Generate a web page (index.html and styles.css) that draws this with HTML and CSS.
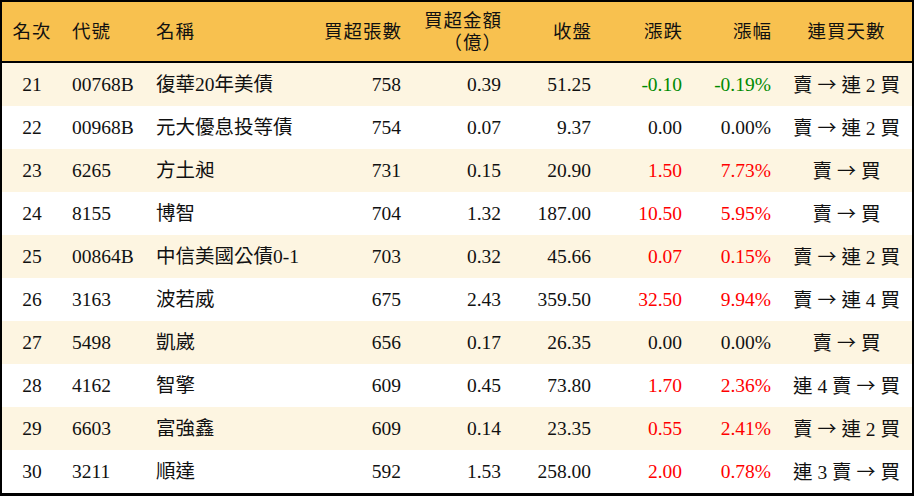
FILE: index.html
```html
<!DOCTYPE html>
<html lang="zh-Hant">
<head>
<meta charset="utf-8">
<title>買超排行</title>
<link rel="stylesheet" href="styles.css">
</head>
<body>
<table class="rank">
  <colgroup>
    <col class="c-rank"><col class="c-code"><col class="c-name"><col class="c-lots"><col class="c-amt"><col class="c-close"><col class="c-chg"><col class="c-pct"><col class="c-days">
  </colgroup>
  <thead>
    <tr>
      <th class="ctr">名次</th>
      <th class="lft">代號</th>
      <th class="lft">名稱</th>
      <th class="rgt">買超張數</th>
      <th class="rgt">買超金額<br>（億）</th>
      <th class="rgt">收盤</th>
      <th class="rgt">漲跌</th>
      <th class="rgt">漲幅</th>
      <th class="ctr">連買天數</th>
    </tr>
  </thead>
  <tbody>
    <tr class="alt"><td class="ctr">21</td><td class="lft">00768B</td><td class="lft">復華20年美債</td><td class="rgt">758</td><td class="rgt">0.39</td><td class="rgt">51.25</td><td class="rgt dn">-0.10</td><td class="rgt dn">-0.19%</td><td class="ctr">賣 <span class="arr">→</span> 連 2 買</td></tr>
    <tr><td class="ctr">22</td><td class="lft">00968B</td><td class="lft">元大優息投等債</td><td class="rgt">754</td><td class="rgt">0.07</td><td class="rgt">9.37</td><td class="rgt">0.00</td><td class="rgt">0.00%</td><td class="ctr">賣 <span class="arr">→</span> 連 2 買</td></tr>
    <tr class="alt"><td class="ctr">23</td><td class="lft">6265</td><td class="lft">方土昶</td><td class="rgt">731</td><td class="rgt">0.15</td><td class="rgt">20.90</td><td class="rgt up">1.50</td><td class="rgt up">7.73%</td><td class="ctr">賣 <span class="arr">→</span> 買</td></tr>
    <tr><td class="ctr">24</td><td class="lft">8155</td><td class="lft">博智</td><td class="rgt">704</td><td class="rgt">1.32</td><td class="rgt">187.00</td><td class="rgt up">10.50</td><td class="rgt up">5.95%</td><td class="ctr">賣 <span class="arr">→</span> 買</td></tr>
    <tr class="alt"><td class="ctr">25</td><td class="lft">00864B</td><td class="lft">中信美國公債0-1</td><td class="rgt">703</td><td class="rgt">0.32</td><td class="rgt">45.66</td><td class="rgt up">0.07</td><td class="rgt up">0.15%</td><td class="ctr">賣 <span class="arr">→</span> 連 2 買</td></tr>
    <tr><td class="ctr">26</td><td class="lft">3163</td><td class="lft">波若威</td><td class="rgt">675</td><td class="rgt">2.43</td><td class="rgt">359.50</td><td class="rgt up">32.50</td><td class="rgt up">9.94%</td><td class="ctr">賣 <span class="arr">→</span> 連 4 買</td></tr>
    <tr class="alt"><td class="ctr">27</td><td class="lft">5498</td><td class="lft">凱崴</td><td class="rgt">656</td><td class="rgt">0.17</td><td class="rgt">26.35</td><td class="rgt">0.00</td><td class="rgt">0.00%</td><td class="ctr">賣 <span class="arr">→</span> 買</td></tr>
    <tr><td class="ctr">28</td><td class="lft">4162</td><td class="lft">智擎</td><td class="rgt">609</td><td class="rgt">0.45</td><td class="rgt">73.80</td><td class="rgt up">1.70</td><td class="rgt up">2.36%</td><td class="ctr">連 4 賣 <span class="arr">→</span> 買</td></tr>
    <tr class="alt"><td class="ctr">29</td><td class="lft">6603</td><td class="lft">富強鑫</td><td class="rgt">609</td><td class="rgt">0.14</td><td class="rgt">23.35</td><td class="rgt up">0.55</td><td class="rgt up">2.41%</td><td class="ctr">賣 <span class="arr">→</span> 連 2 買</td></tr>
    <tr><td class="ctr">30</td><td class="lft">3211</td><td class="lft">順達</td><td class="rgt">592</td><td class="rgt">1.53</td><td class="rgt">258.00</td><td class="rgt up">2.00</td><td class="rgt up">0.78%</td><td class="ctr">連 3 賣 <span class="arr">→</span> 買</td></tr>
  </tbody>
</table>
</body>
</html>
```

FILE: styles.css
```css
html, body {
  margin: 0;
  padding: 0;
  background: #ffffff;
}

.rank {
  width: 914px;
  border-collapse: separate;
  border-spacing: 0;
  table-layout: fixed;
  border: 2px solid #000;
  border-bottom-width: 3px;
  font-family: "Liberation Serif", "Noto Sans CJK TC", serif;
  font-size: 19.5px;
  color: #111;
}

.c-rank { width: 60px; }
.c-code { width: 84px; }
.c-name { width: 165px; }
.c-lots { width: 100px; }
.c-amt { width: 100px; }
.c-close { width: 90px; }
.c-chg { width: 91px; }
.c-pct { width: 89px; }
.c-days { width: 131px; }

thead tr {
  height: 61px;
  background: #f8c14f;
}

th {
  font-weight: normal;
  font-size: 18.5px;
  letter-spacing: 1px;
  line-height: 22px;
  padding: 0 10px;
  white-space: nowrap;
  border-bottom: 2px solid #000;
}

th.rgt { padding-right: 9px; }

tbody tr {
  height: 43px;
  background: #ffffff;
}

tbody tr.alt {
  background: #fdf5e1;
}

td {
  padding: 0 10px;
  white-space: nowrap;
  line-height: 22px;
}

.ctr { text-align: center; padding: 0; }
.lft { text-align: left; }
.rgt { text-align: right; }

.arr {
  font-family: "Noto Sans CJK TC", sans-serif;
  font-size: 19px;
}

.up { color: #ff0000; }
.dn { color: #008a00; }
```
